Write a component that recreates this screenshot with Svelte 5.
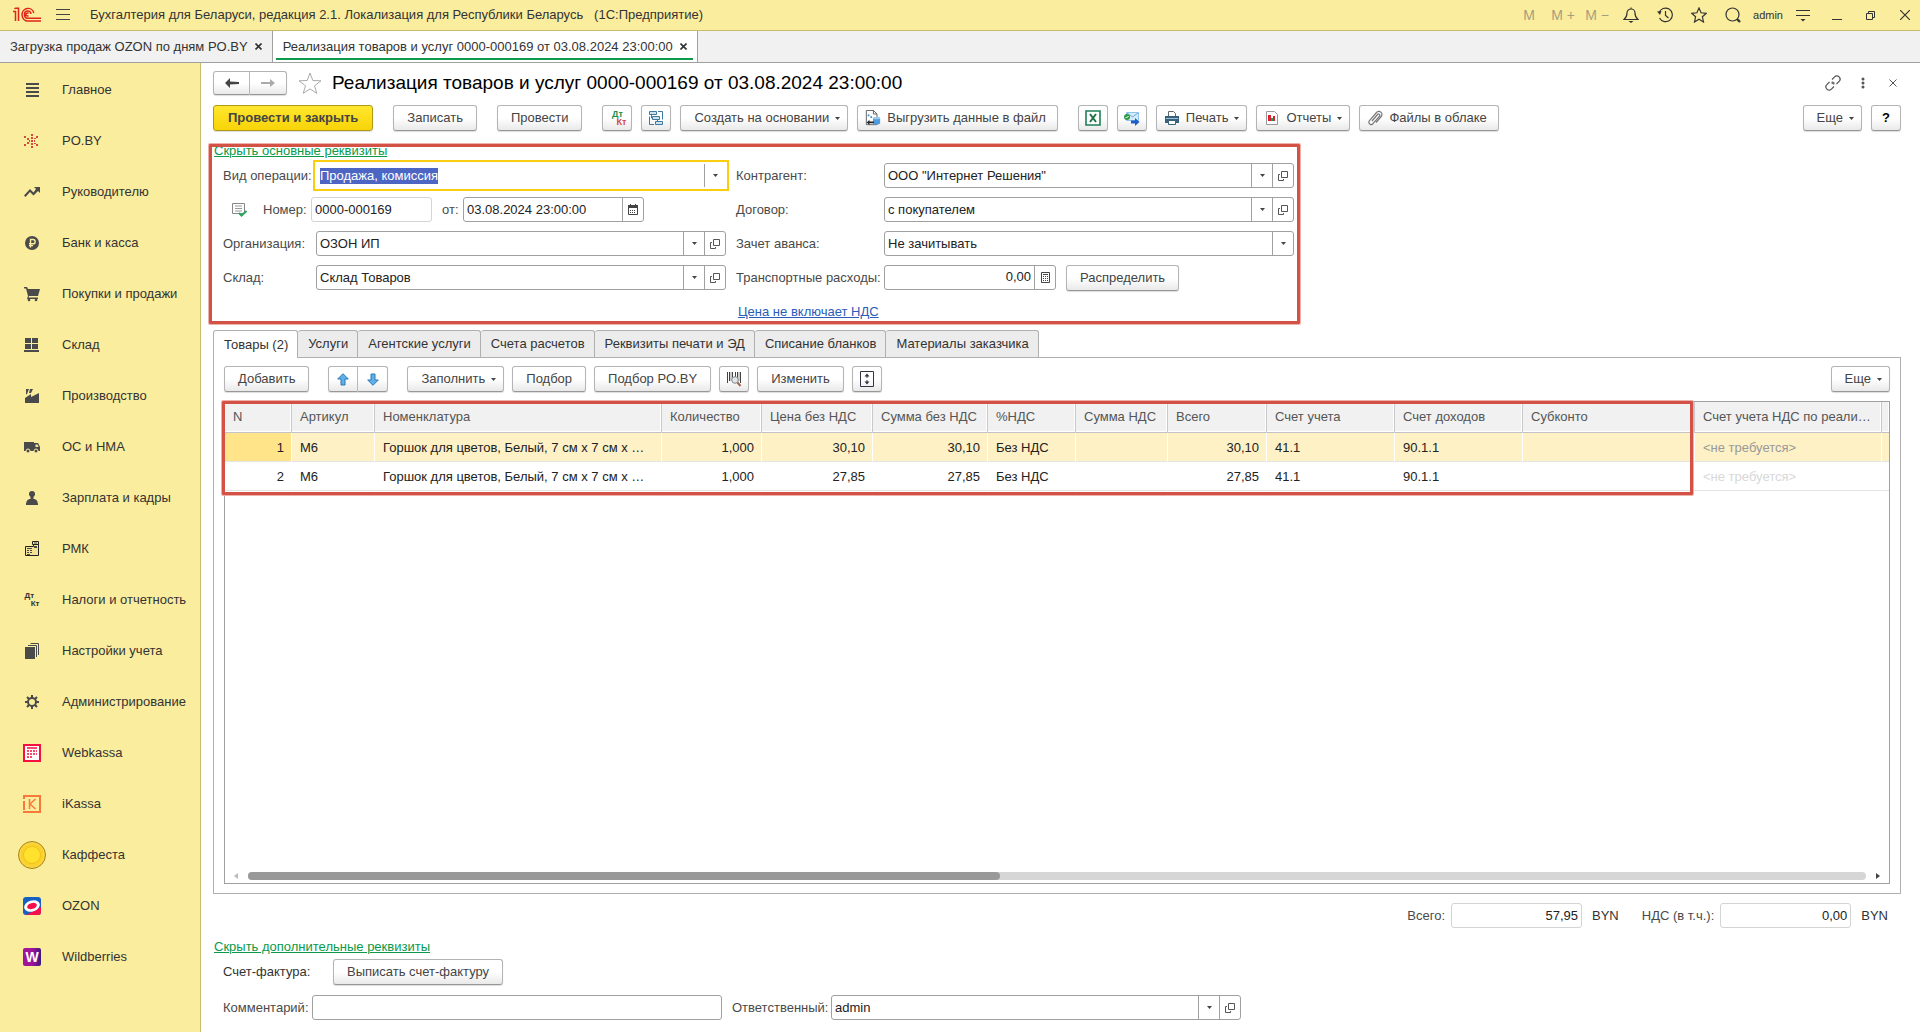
<script>
  import { onMount } from 'svelte'

  const docTabs = [
    { title: 'Загрузка продаж OZON по дням PO.BY', active: false },
    { title: 'Реализация товаров и услуг 0000-000169 от 03.08.2024 23:00:00', active: true },
  ]

  const sections = [
    ['list', 'Главное'],
    ['poby', 'PO.BY'],
    ['trend', 'Руководителю'],
    ['ruble', 'Банк и касса'],
    ['cart', 'Покупки и продажи'],
    ['stock', 'Склад'],
    ['factory', 'Производство'],
    ['truck', 'ОС и НМА'],
    ['person', 'Зарплата и кадры'],
    ['register', 'РМК'],
    ['dtkt', 'Налоги и отчетность'],
    ['books', 'Настройки учета'],
    ['gear', 'Администрирование'],
    ['webkassa', 'Webkassa'],
    ['ikassa', 'iKassa'],
    ['coin', 'Каффеста'],
    ['ozon', 'OZON'],
    ['wb', 'Wildberries'],
  ]

  const pages = [
    'Товары (2)',
    'Услуги',
    'Агентские услуги',
    'Счета расчетов',
    'Реквизиты печати и ЭД',
    'Списание бланков',
    'Материалы заказчика',
  ]

  const columns = [
    { title: 'N', width: 67, num: true },
    { title: 'Артикул', width: 83 },
    { title: 'Номенклатура', width: 287 },
    { title: 'Количество', width: 100, num: true },
    { title: 'Цена без НДС', width: 111, num: true },
    { title: 'Сумма без НДС', width: 115, num: true },
    { title: '%НДС', width: 88 },
    { title: 'Сумма НДС', width: 92, num: true },
    { title: 'Всего', width: 99, num: true },
    { title: 'Счет учета', width: 128 },
    { title: 'Счет доходов', width: 128 },
    { title: 'Субконто', width: 172 },
    { title: 'Счет учета НДС по реали…', width: 187, muted: true },
  ]

  const item = 'Горшок для цветов, Белый, 7 см х 7 см х 7 см'
  const rows = [
    ['1', 'М6', item, '1,000', '30,10', '30,10', 'Без НДС', '', '30,10', '41.1', '90.1.1', '', '<не требуется>'],
    ['2', 'М6', item, '1,000', '27,85', '27,85', 'Без НДС', '', '27,85', '41.1', '90.1.1', '', '<не требуется>'],
  ]

  let page = $state(0)
  let current = $state(0)
  let operation

  onMount(() => {
    operation.focus()
    operation.select()
  })
</script>

{#snippet caret()}
  <svg width="5" height="3" viewBox="0 0 5 3"><path d="M0 0h5L2.500 3z" fill="#444" /></svg>
{/snippet}

{#snippet openIcon()}
  <svg width="10" height="10" viewBox="0 0 10 10" fill="none" stroke="#555"><path d="M3.500.5h6v6h-6zM2 3.500H.5v6h5V8" /></svg>
{/snippet}

{#snippet pick(name)}
  <button class="part" aria-label="Выбрать: {name}">{@render caret()}</button>
  <button class="part" aria-label="Открыть: {name}">{@render openIcon()}</button>
{/snippet}

{#snippet dtkt()}
  <span class="dtkt"><span>Дт</span><span>Кт</span></span>
{/snippet}

{#snippet sectionIcon(name)}
  {#if name === 'dtkt'}
    {@render dtkt()}
  {:else if name === 'coin'}
    <svg width="28" height="28" viewBox="0 0 28 28"><circle cx="14" cy="14" r="13.500" fill="#fbd12c" stroke="#a88420" /><circle cx="14" cy="14" r="12" fill="none" stroke="#f7df6a" stroke-dasharray="1 1" /><circle cx="14" cy="14" r="8.500" fill="#ffe22d" stroke="#f3c018" /></svg>
  {:else if name === 'webkassa'}
    <svg width="18" height="18" viewBox="0 0 18 18"><path d="M1 1h16v16H1z" fill="#fff" stroke="#f5103f" stroke-width="2" /><path d="M4 4h10M4 7h2m1 0h2m1 0h2m1 0h1M4 10h2m1 0h2m1 0h2m1 0h1M4 13h2m1 0h2" stroke="#f5103f" stroke-width="1.600" /></svg>
  {:else if name === 'ikassa'}
    <svg width="18" height="18" viewBox="0 0 18 18" fill="none" stroke="#f9793a" stroke-width="2"><path d="M0 1h17v16H0M1 6v9M1 2v2" /><path d="M6.500 4v10M12.500 4l-5.500 5 5.500 5" stroke-width="1.500" /></svg>
  {:else if name === 'ozon'}
    <svg width="18" height="18" viewBox="0 0 18 18"><rect width="18" height="18" rx="3" fill="#1660c4" /><path d="M3 18 18 10v5a3 3 0 0 1-3 3z" fill="#f5104a" /><ellipse cx="9" cy="9" rx="8" ry="5.500" fill="#fff" transform="rotate(-18 9 9)" /><ellipse cx="9" cy="9" rx="5" ry="3" fill="#f5104a" transform="rotate(-18 9 9)" /></svg>
  {:else if name === 'wb'}
    <svg width="18" height="18" viewBox="0 0 18 18"><defs><linearGradient id="wb"><stop offset=".5" stop-color="#a0149b" /><stop offset="1" stop-color="#40187c" /></linearGradient></defs><rect width="18" height="18" rx="2" fill="url(#wb)" /><text x="9" y="14" text-anchor="middle" fill="#fff" font-size="14" font-weight="bold">W</text></svg>
  {:else}
    <svg width="16" height="16" viewBox="0 0 16 16" fill="#4a4a4a">
      {#if name === 'list'}
        <path d="M2 1h13v2H2zM2 5h13v2H2zM2 9h13v2H2zM2 13h13v2H2z" />
      {:else if name === 'poby'}
        <path fill="#d4493d" d="M7 1h2v2H7zM7 4h2v2H7zM7 7h2v2H7zM7 10h2v2H7zM7 13h2v2H7zM0 3h2v2H0zM3 5h2v2H3zM0 11h2v2H0zM3 9h2v2H3zM5 7h1v2H5zM10 7h1v2h-1zM12 3h2v2h-2zM10 5h2v1h-2zM12 11h2v2h-2zM10 10h2v1h-2z" />
      {:else if name === 'trend'}
        <path d="M10 3h6v6l-2-2-4.500 4.500L6 8l-4.500 5L0 11.500 6 5l3.500 3.500L12 5z" />
      {:else if name === 'ruble'}
        <circle cx="8" cy="8" r="7" /><path d="M6.500 12.500V4.500H9a2 2 0 0 1 0 4.300H5M5 10.600h4" fill="none" stroke="#fbec9e" stroke-width="1.400" />
      {:else if name === 'cart'}
        <path d="M0 1h3l1 2h12l-2 7H5l-.5 1.500H14V13H3l1-3L2 2.500H0z" /><circle cx="5" cy="14" r="1.300" /><circle cx="12" cy="14" r="1.300" />
      {:else if name === 'stock'}
        <path d="M1 1h6v5H1zM8 1h6v5H8zM1 7h6v5H1zM8 7h6v5H8zM0 13h15v2H0z" />
      {:else if name === 'factory'}
        <path d="M1 15v-5l6-4v3l8-4v10zM2 1h3L3 6l-1 .500zM6 1h3L7 5 5 5z" />
      {:else if name === 'truck'}
        <path d="M0 3h10v1h4l2 4v4H0z" /><path d="M11.500 5.500h2l1 2.500h-3z" fill="#fbec9e" /><circle cx="4" cy="12" r="2" stroke="#fbec9e" /><circle cx="12" cy="12" r="2" stroke="#fbec9e" />
      {:else if name === 'person'}
        <circle cx="8" cy="4" r="3" /><path d="M6.500 6h3v3h-3zM2 15c0-4 2-6 4-6h4c2 0 4 2 4 6z" />
      {:else if name === 'register'}
        <path d="M1.500 5.500h8v-2h5v11h-13zM8.500.5h6v3h-6z" fill="#f3e394" stroke="#222" /><path d="M3 7h5v1H3zM3 9h2v1H3zM6 9h2v1H6zM3 11h2v1H3zM6 11h2v1H6zM3 13h3v1H3zM10 1.500h3v1h-3zM10 5h3v2h-3z" />
      {:else if name === 'books'}
        <path d="M1 4h10v12H1z" /><path d="M4 2.500h8.500V14M6.500.5h8V12" fill="none" stroke="#4a4a4a" />
      {:else if name === 'gear'}
        <circle cx="8" cy="8" r="4" fill="none" stroke="#4a4a4a" stroke-width="2" /><path d="M7 1h2v3H7zM7 12h2v3H7zM1 7h3v2H1zM12 7h3v2h-3z" /><path d="m3 3 2 2m6 6 2 2M13 3l-2 2m-6 6-2 2" stroke="#4a4a4a" stroke-width="2" />
      {/if}
    </svg>
  {/if}
{/snippet}

<div class="app">
  <header class="titlebar">
    <svg class="logo" width="28" height="16" viewBox="0 0 28 16" fill="none" stroke="#e2231a" stroke-width="1.500">
      <path d="M0 4.500h2.500V14M1.500 2l1-.8h3V14M20.800 6A6 6.300 0 1 0 15 14h13M18 7a3.300 3.600 0 1 0-3 4.200h13M15.500 6.500a1.500 1.500 0 1 0 0 2" />
    </svg>
    <button class="bar-btn menu" aria-label="Меню">
      <svg width="14" height="12" viewBox="0 0 14 12"><path d="M0 .500h14M0 5.500h14M0 10.500h14" stroke="#444" /></svg>
    </button>
    <span class="app-title">Бухгалтерия для Беларуси, редакция 2.1. Локализация для Республики Беларусь&nbsp;&nbsp; (1С:Предприятие)</span>
    <div class="bar-tools">
      <button class="bar-btn mem">M</button>
      <button class="bar-btn mem">M +</button>
      <button class="bar-btn mem">M −</button>
      <button class="bar-btn" aria-label="Уведомления">
        <svg width="16" height="16" viewBox="0 0 16 16" fill="none" stroke="#333" stroke-width="1.200"><path d="M1 12.500c2.500-2 3-4 3-6.500a4 4 0 0 1 8 0c0 2.500.5 4.500 3 6.500zM8 .500V2" /><path d="M5.500 14h5L8 16z" fill="#333" stroke="none" /></svg>
      </button>
      <button class="bar-btn" aria-label="История">
        <svg width="16" height="16" viewBox="0 0 16 16" fill="none" stroke="#333" stroke-width="1.200"><path d="M2 6a6.800 6.800 0 1 1 .5 5M8.500 4v4.500l3 2.500" /><path d="M0 4.500 4.500 4 3 8z" fill="#333" stroke="none" /></svg>
      </button>
      <button class="bar-btn" aria-label="Избранное">
        <svg width="16" height="16" viewBox="0 0 16 16" fill="none" stroke="#333" stroke-width="1.200"><path d="m8 1 2.100 4.800 5.200.500-3.900 3.500 1.100 5.200L8 12.300 3.500 15l1.100-5.200L.7 6.300l5.200-.5z" /></svg>
      </button>
      <button class="bar-btn" aria-label="Поиск">
        <svg width="16" height="16" viewBox="0 0 16 16" fill="none" stroke="#333" stroke-width="1.200"><circle cx="7.500" cy="7.500" r="6.500" /><path d="m12 12 3 3" stroke-width="2.400" /></svg>
      </button>
      <button class="bar-btn user">admin</button>
      <button class="bar-btn" aria-label="Сервис">
        <svg width="14" height="13" viewBox="0 0 14 13"><path d="M0 1.500h14M0 6.500h14" stroke="#333" /><path d="M4.500 10h5L7 12.500z" fill="#333" /></svg>
      </button>
      <button class="bar-btn" aria-label="Свернуть">
        <svg width="10" height="10" viewBox="0 0 10 10"><path d="M0 9.500h10" stroke="#333" /></svg>
      </button>
      <button class="bar-btn" aria-label="Восстановить">
        <svg width="10" height="10" viewBox="0 0 10 10" fill="none" stroke="#333"><path d="M.5 3.500h6v6h-6zM2.500 3.500v-2h6v6h-2" /></svg>
      </button>
      <button class="bar-btn" aria-label="Закрыть программу">
        <svg width="10" height="10" viewBox="0 0 10 10"><path d="m0 0 10 10M10 0 0 10" stroke="#333" stroke-width="1.200" /></svg>
      </button>
    </div>
  </header>

  <div class="doc-tabs">
    {#each docTabs as tab}
      <div class="doc-tab" class:active={tab.active}>
        <button class="doc-name">{tab.title}</button>
        <button class="doc-close" aria-label="Закрыть вкладку">
          <svg width="7" height="7" viewBox="0 0 7 7"><path d="m.5.5 6 6m0-6-6 6" stroke="#333" stroke-width="1.600" /></svg>
        </button>
      </div>
    {/each}
  </div>

  <div class="body">
    <nav class="sections">
      {#each sections as [icon, label]}
        <a href="#{icon}">
          <span class="section-icon">{@render sectionIcon(icon)}</span>
          {label}
        </a>
      {/each}
    </nav>

    <main>
      <div class="form-head">
        <div class="btn-pair">
          <button class="btn" aria-label="Назад">
            <svg width="14" height="10" viewBox="0 0 14 10"><path d="M0 5 5 0v3.500L14 4v2l-9 .500V10z" fill="#444" /></svg>
          </button>
          <button class="btn" aria-label="Вперед">
            <svg width="14" height="10" viewBox="0 0 14 10"><path d="M14 5 9 1v3H0v2h9v3z" fill="#aaa" /></svg>
          </button>
        </div>
        <button class="plain star" aria-label="В избранное">
          <svg width="24" height="22" viewBox="0 0 24 22" fill="none" stroke="#aaa"><path d="m12 1 2.800 7.500 8.200.3-6.500 5 2.300 7.500-6.800-4.400-6.800 4.400 2.300-7.500L1 8.800l8.200-.3z" /></svg>
        </button>
        <h1>Реализация товаров и услуг 0000-000169 от 03.08.2024 23:00:00</h1>
        <div class="head-tools">
          <button class="plain" aria-label="Получить ссылку">
            <svg width="16" height="16" viewBox="0 0 16 16" fill="none" stroke="#555" stroke-width="1.200"><path d="m7 4.500 2.600-2.600a3 3 0 0 1 4.500 4.500L11.500 9M9 11.500l-2.600 2.600a3 3 0 0 1-4.500-4.500L4.500 7M7.500 9a2.500 2.500 0 0 1 0-2.500M8.500 7a2.500 2.500 0 0 1 0 2.500" /></svg>
          </button>
          <button class="plain" aria-label="Дополнительно">
            <svg width="4" height="12" viewBox="0 0 4 12" fill="#555"><circle cx="2" cy="2" r="1.500" /><circle cx="2" cy="6" r="1.500" /><circle cx="2" cy="10" r="1.500" /></svg>
          </button>
          <button class="plain" aria-label="Закрыть">
            <svg width="8" height="8" viewBox="0 0 8 8"><path d="m.5.5 7 7m0-7-7 7" stroke="#555" /></svg>
          </button>
        </div>
      </div>

      <div class="toolbar">
        <button class="btn primary">Провести и закрыть</button>
        <button class="btn group">Записать</button>
        <button class="btn group">Провести</button>
        <button class="btn square group color" aria-label="Дт Кт">{@render dtkt()}</button>
        <button class="btn square" aria-label="Структура подчиненности">
          <svg width="16" height="16" viewBox="0 0 16 16" fill="none" stroke="#3c78a0"><path d="M1.500 1.500h7v3h-7zM4.500 6.500h7v3h-7zM7.500 11.500h7v3h-7z" fill="#cfe3ef" /><path d="M10 1.500h4.500v8M1.500 6.500v8H6M3.500 4.500v3.500h1M9.500 9.500v2" /></svg>
        </button>
        <button class="btn drop">Создать на основании {@render caret()}</button>
        <button class="btn with-icon">
          <svg width="16" height="16" viewBox="0 0 18 18"><path d="M1.500.5h8l4 4v12h-12z" fill="#fff" stroke="#555" /><path d="M9.500.5v4h4" fill="none" stroke="#555" /><path d="M3 5h2v2H3zM6 7h2v2H6z" fill="#3a8cc4" /><ellipse cx="13" cy="9" rx="4" ry="1.500" fill="#9cc8ec" /><path d="M9 9v6c0 2 8 2 8 0V9c0 2-8 2-8 0" fill="#4f9bdc" /><path d="m2 14 3-3v2h5v2H5v2z" fill="#222" /></svg>
          Выгрузить данные в файл
        </button>
        <button class="btn square group" aria-label="Excel">
          <svg width="16" height="16" viewBox="0 0 16 16"><path d="M1 1h14v14H1z" fill="#fff" stroke="#1e7f55" stroke-width="1.600" /><path d="m5 4 6 8M11 4l-6 8" stroke="#1e7145" stroke-width="2" /></svg>
        </button>
        <button class="btn square" aria-label="Отправить">
          <svg width="16" height="16" viewBox="0 0 16 16"><path d="M2.500 2.500h12v8h-12z" fill="#d6ebfa" stroke="#8cc4ee" /><path d="m3 3 5.500 4L14 3" fill="none" stroke="#6aa9d8" /><circle cx="3" cy="7" r="3" fill="#2f9a48" /><path d="m1.500 7 1 1 2-2" fill="none" stroke="#fff" /><path d="M7 10.500h4V8l4.500 4L11 16v-2.500H7z" fill="#1a5fc8" /></svg>
        </button>
        <button class="btn drop with-icon">
          <svg width="16" height="16" viewBox="0 0 16 16"><path d="M4.500 1.500h5l2 2V7h-7z" fill="#fff" stroke="#666" /><path d="M1 6h14v7H1z" fill="#38617d" /><path d="M2 8h12v1H2z" fill="#9cc0d4" /><path d="M4.500 10.500h7v4h-7z" fill="#fff" stroke="#38617d" /></svg>
          Печать {@render caret()}
        </button>
        <button class="btn drop with-icon">
          <svg width="16" height="16" viewBox="0 0 16 16"><path d="M2.500 1.500h8l3 3v10h-11z" fill="#fff" stroke="#999" /><path d="M4 5h3v6H4z" fill="#d9232e" /><path d="M7 8h2v3H7z" fill="#1e9a5a" /><path d="M9 6h2v5H9z" fill="#d9232e" /></svg>
          Отчеты {@render caret()}
        </button>
        <button class="btn with-icon">
          <svg width="16" height="16" viewBox="0 0 16 16" fill="none" stroke="#777" stroke-width="1.200"><path d="m5 11 5.500-6.500a1.200 1.200 0 0 1 2 1.700l-6.500 7.500a2.300 2.300 0 0 1-3.500-3L9.500 2.500a3 3 0 0 1 4.700 4L9 12.500" /></svg>
          Файлы в облаке
        </button>
        <button class="btn drop last">Еще {@render caret()}</button>
        <button class="btn square help">?</button>
      </div>

      <section class="details">
        <a class="fold" href="#main">Скрыть основные реквизиты</a>
        <div class="fields">
          <label for="operation">Вид операции:</label>
          <div class="field focus">
            <input id="operation" value="Продажа, комиссия" bind:this={operation} />
            <button class="part" aria-label="Выбрать вид операции">{@render caret()}</button>
          </div>
          <label class="second" for="partner">Контрагент:</label>
          <div class="field">
            <input id="partner" value={'ООО "Интернет Решения"'} />
            {@render pick('контрагент')}
          </div>

          <div class="number">
            <svg width="16" height="14" viewBox="0 0 16 14"><path d="M.5.5h12v10H.500z" fill="#fff" stroke="#888" /><path d="M3 3h7M3 5.500h7M3 8h7" stroke="#999" /><path d="m7 10 2.500 2.500L14.500 8" fill="none" stroke="#2fa45c" stroke-width="2" /></svg>
            <label for="number">Номер:</label>
            <div class="field readonly short"><input id="number" value="0000-000169" readonly /></div>
            <label for="date">от:</label>
            <div class="field date">
              <input id="date" value="03.08.2024 23:00:00" />
              <button class="part" aria-label="Календарь">
                <svg width="10" height="11" viewBox="0 0 10 11"><path d="M.5 2.500h9v8h-9z" fill="none" stroke="#444" /><path d="M0 1h10v3H0zM2 0h1v2H2zM7 0h1v2H7z" fill="#444" /><path d="M2 6.500h6M2 8.500h6" stroke="#444" stroke-dasharray="1 1" /></svg>
              </button>
            </div>
          </div>
          <label class="second" for="contract">Договор:</label>
          <div class="field">
            <input id="contract" value="с покупателем" />
            {@render pick('договор')}
          </div>

          <label for="company">Организация:</label>
          <div class="field">
            <input id="company" value="ОЗОН ИП" />
            {@render pick('организация')}
          </div>
          <label class="second" for="advance">Зачет аванса:</label>
          <div class="field">
            <select id="advance"><option>Не зачитывать</option></select>
            <span class="part">{@render caret()}</span>
          </div>

          <label for="store">Склад:</label>
          <div class="field">
            <input id="store" value="Склад Товаров" />
            {@render pick('склад')}
          </div>
          <label class="second" for="transport">Транспортные расходы:</label>
          <div class="transport">
            <div class="field">
              <input id="transport" class="num" value="0,00" />
              <button class="part" aria-label="Калькулятор">
                <svg width="9" height="11" viewBox="0 0 9 11"><path d="M.5.5h8v10h-8z" fill="none" stroke="#444" /><path d="M2 2.500h5" stroke="#444" /><path d="M2 4.500h5M2 6.500h5M2 8.500h5" stroke="#444" stroke-dasharray="1 1" /></svg>
              </button>
            </div>
            <button class="btn">Распределить</button>
          </div>

          <a class="vat" href="#vat">Цена не включает НДС</a>
        </div>
      </section>

      <div class="pages" role="tablist">
        {#each pages as title, i}
          <button role="tab" class:active={page === i} aria-selected={page === i} onclick={() => (page = i)}>{title}</button>
        {/each}
      </div>

      <section class="panel">
        <div class="toolbar">
          <button class="btn">Добавить</button>
          <div class="btn-pair group">
            <button class="btn" aria-label="Вверх">
              <svg width="12" height="13" viewBox="0 0 12 13"><path d="m6 .700 5.300 5.300H8v6H4V6H.7z" fill="#5eb0ea" stroke="#2a78b4" /></svg>
            </button>
            <button class="btn" aria-label="Вниз">
              <svg width="12" height="13" viewBox="0 0 12 13"><path d="M6 12.300 11.300 7H8V1H4v6H.7z" fill="#5eb0ea" stroke="#2a78b4" /></svg>
            </button>
          </div>
          <button class="btn drop group">Заполнить {@render caret()}</button>
          <button class="btn">Подбор</button>
          <button class="btn">Подбор PO.BY</button>
          <button class="btn square" aria-label="Поиск по штрихкоду">
            <svg width="16" height="16" viewBox="0 0 16 16"><path d="M1.500 1v11M3.500 1v9M6.500 1v9M9.500 1v6M11.500 1v6M14.500 1v11" stroke="#444" /><path d="M5 1v9M13 1v9" stroke="#999" /><circle cx="9" cy="9" r="3.300" fill="#dde6ec" stroke="#888" /><path d="m11.500 11.500 3 3.500" stroke="#a0664a" stroke-width="2" /></svg>
          </button>
          <button class="btn">Изменить</button>
          <button class="btn square" aria-label="Высота строк">
            <svg width="16" height="16" viewBox="0 0 16 16"><path d="M1.500.5h13v15h-13z" fill="none" stroke="#334" /><path d="M8 4v3M8 9v3" stroke="#334" /><path d="M5.500 5.500h5L8 2.500zM5.500 10.500h5l-2.500 3z" fill="#334" /></svg>
          </button>
          <button class="btn drop last">Еще {@render caret()}</button>
        </div>

        <div class="grid">
          <table>
            <colgroup>
              {#each columns as col}
                <col style="width: {col.width}px" />
              {/each}
              <col />
            </colgroup>
            <thead>
              <tr>
                {#each columns as col}
                  <th>{col.title}</th>
                {/each}
                <th></th>
              </tr>
            </thead>
            <tbody>
              {#each rows as row, r}
                <tr class:current={current === r} onclick={() => (current = r)}>
                  {#each row as cell, c}
                    <td class:num={columns[c].num} class:muted={columns[c].muted}>{cell}</td>
                  {/each}
                  <td></td>
                </tr>
              {/each}
            </tbody>
          </table>
          <div class="scroll">
            <svg width="4" height="6" viewBox="0 0 4 6"><path d="M4 0v6L0 3z" fill="#bbb" /></svg>
            <div class="track"><div class="thumb"></div></div>
            <svg width="4" height="6" viewBox="0 0 4 6"><path d="M0 0v6l4-3z" fill="#444" /></svg>
          </div>
        </div>
      </section>

      <div class="totals">
        <label for="total">Всего:</label>
        <div class="field readonly"><input id="total" class="num" value="57,95" readonly /></div>
        <span class="currency">BYN</span>
        <label for="vat-total">НДС (в т.ч.):</label>
        <div class="field readonly"><input id="vat-total" class="num" value="0,00" readonly /></div>
        <span class="currency">BYN</span>
      </div>

      <footer>
        <a class="fold" href="#extra">Скрыть дополнительные реквизиты</a>
        <div class="line invoice">
          <span>Счет-фактура:</span>
          <button class="btn">Выписать счет-фактуру</button>
        </div>
        <div class="line">
          <label for="comment">Комментарий:</label>
          <div class="field"><input id="comment" /></div>
          <label class="resp" for="resp">Ответственный:</label>
          <div class="field">
            <input id="resp" value="admin" />
            {@render pick('ответственный')}
          </div>
        </div>
      </footer>
    </main>
  </div>
</div>

<style>
  :global(body) {
    margin: 0;
    background: #fff;
  }

  .app {
    display: flex;
    flex-direction: column;
    min-height: 100vh;
    font: 13px/16px 'Liberation Sans', Arial, sans-serif;
    color: #333;
  }

  .app *,
  .app *::after {
    box-sizing: border-box;
  }

  button,
  input,
  select {
    margin: 0;
    font: inherit;
    color: inherit;
  }

  svg {
    display: block;
    flex: none;
  }

  /* window title */
  .titlebar {
    display: flex;
    align-items: center;
    height: 31px;
    padding-left: 13px;
    background: #fbed9e;
    border-bottom: 1px solid #c9bb6c;
  }

  .bar-btn,
  .plain {
    display: flex;
    align-items: center;
    justify-content: center;
    padding: 0;
    border: 0;
    background: none;
  }

  .bar-btn {
    width: 30px;
    height: 28px;
  }

  .menu {
    margin: 0 12px 0 7px;
  }

  .app-title {
    flex: 1;
    white-space: nowrap;
  }

  .bar-tools {
    display: flex;
    gap: 4px;
  }

  .mem {
    font-size: 14px;
    color: #a69f7c;
    white-space: nowrap;
  }

  .user {
    width: 32px;
    font-size: 11px;
  }

  /* open documents */
  .doc-tabs {
    display: flex;
    height: 32px;
    background: #f1f1f1;
    border-bottom: 1px solid #a0a0a0;
  }

  .doc-tab {
    position: relative;
    display: flex;
    align-items: center;
    padding: 0 5px 0 10px;
    border-right: 1px solid #a0a0a0;
  }

  .doc-tab.active {
    background: #fff;
  }

  .doc-tab.active::after {
    content: '';
    position: absolute;
    inset: auto 4px 2px 3px;
    height: 2px;
    background: #0a9a4a;
  }

  .doc-name,
  .doc-close {
    padding: 0;
    border: 0;
    background: none;
    white-space: nowrap;
  }

  .doc-close {
    display: flex;
    justify-content: center;
    width: 16px;
    margin-left: 3px;
  }

  .body {
    display: flex;
    flex: 1;
  }

  /* sections panel */
  .sections {
    flex: none;
    width: 201px;
    padding-top: 1px;
    background: #fbed9e;
    border-right: 1px solid #c9bb6c;
  }

  .sections a {
    display: flex;
    align-items: center;
    gap: 16px;
    height: 51px;
    padding-left: 18px;
    color: #333;
    text-decoration: none;
    white-space: nowrap;
  }

  .section-icon {
    display: flex;
    justify-content: center;
    width: 28px;
  }

  .dtkt {
    display: flex;
    flex-direction: column;
    width: 15px;
    font-size: 8px;
    font-weight: bold;
    line-height: 8px;
  }

  .dtkt span + span {
    align-self: flex-end;
  }

  .color .dtkt {
    width: 18px;
    font-size: 9px;
    color: #1d8f4d;
  }

  .color .dtkt span + span {
    color: #d4493d;
  }

  main {
    display: flex;
    flex: 1;
    flex-direction: column;
    min-width: 0;
    padding: 8px 19px 12px 12px;
  }

  .form-head {
    display: flex;
    align-items: center;
    height: 24px;
  }

  .star {
    margin: 0 10px 0 11px;
  }

  h1 {
    flex: 1;
    margin: 0;
    font-size: 19px;
    font-weight: normal;
    line-height: 24px;
    color: #000;
  }

  .head-tools {
    display: flex;
    margin-right: -7px;
  }

  .head-tools .plain {
    width: 30px;
    height: 24px;
  }

  /* buttons */
  .btn {
    display: flex;
    align-items: center;
    justify-content: center;
    height: 26px;
    padding: 0 13px;
    border: 1px solid #b4b4b4;
    border-bottom-color: #979797;
    border-radius: 3px;
    background: linear-gradient(#fff 50%, #e9e9e9);
    box-shadow: 0 1px 1px #ddd;
    color: #444;
    white-space: nowrap;
  }

  .primary {
    padding: 0 14px;
    border-color: #b09a14;
    background: linear-gradient(#ffe62e, #f8d408);
    font-weight: bold;
  }

  .square {
    width: 30px;
    padding: 0;
  }

  .drop {
    gap: 6px;
    padding-right: 7px;
  }

  .with-icon {
    gap: 6px;
    padding-left: 7px;
  }

  .with-icon:not(.drop) {
    padding-right: 11px;
  }

  .help {
    color: #000;
    font-weight: bold;
  }

  .btn-pair {
    display: flex;
  }

  .btn-pair .btn {
    width: 30px;
    padding: 0;
  }

  .form-head .btn-pair .btn {
    width: 37px;
    height: 24px;
  }

  .btn-pair .btn:first-child {
    border-radius: 3px 0 0 3px;
  }

  .btn-pair .btn:last-child {
    border-left: 0;
    border-radius: 0 3px 3px 0;
  }

  .toolbar {
    display: flex;
    gap: 9px;
  }

  main > .toolbar {
    margin-top: 10px;
  }

  .panel .toolbar {
    gap: 8px;
  }

  .toolbar .group {
    margin-left: 11px;
  }

  .toolbar .last {
    margin-left: auto;
  }

  /* input fields */
  .field {
    display: flex;
    height: 25px;
    min-width: 0;
    border: 1px solid #a0a0a0;
    border-radius: 3px;
    background: #fff;
  }

  .field input,
  .field select {
    flex: 1;
    min-width: 0;
    width: 0;
    padding: 0 3px;
    border: 0;
    outline: 0;
    background: none;
    appearance: none;
    color: #222;
  }

  .field input::selection {
    background: #4d66c4;
    color: #fff;
  }

  input.num,
  td.num {
    text-align: right;
  }

  .part {
    display: flex;
    align-items: center;
    justify-content: center;
    width: 21px;
    padding: 0;
    border: 0;
    border-left: 1px solid #a0a0a0;
    background: none;
  }

  .readonly {
    border-color: #d4d4d4;
  }

  .focus {
    border-color: transparent;
    outline: 2px solid #fbcd0f;
    outline-offset: 1px;
    border-radius: 0;
  }

  a.fold,
  a.vat {
    color: #0a9a4a;
  }

  .fold {
    display: block;
    width: max-content;
    margin-left: 1px;
  }

  .details {
    position: relative;
    margin-top: 12px;
  }

  /* red marker frames */
  .details::after,
  .grid::after {
    content: '';
    position: absolute;
    border: 3px solid #d35245;
    box-shadow: 0 0 0 1px #eeb0aa;
    border-radius: 1px;
    pointer-events: none;
  }

  .details::after {
    top: 1px;
    left: -4px;
    width: 1091px;
    height: 180px;
  }

  .fields {
    display: grid;
    grid-template-columns: 93px minmax(0, 410px) 158px minmax(0, 410px);
    grid-auto-rows: 25px;
    row-gap: 9px;
    align-items: center;
    padding: 4px 0 0 10px;
  }

  .second {
    padding-left: 10px;
  }

  label {
    color: #4a4a4a;
    white-space: nowrap;
  }

  .number {
    display: flex;
    grid-column: span 2;
    align-items: center;
    padding-left: 9px;
  }

  .number label {
    width: 48px;
    margin-left: 15px;
  }

  .number .short {
    width: 121px;
  }

  .number .short + label {
    width: 21px;
    margin-left: 10px;
  }

  .date {
    width: 181px;
  }

  .transport {
    display: flex;
    gap: 10px;
  }

  .transport .field {
    width: 172px;
  }

  a.vat {
    grid-column: 3 / span 2;
    padding-left: 12px;
    color: #2a5db8;
  }

  /* form pages */
  .pages {
    display: flex;
    margin-top: 6px;
  }

  .pages button {
    height: 27px;
    padding: 0 9px 0 10px;
    border: 1px solid #b0b0b0;
    border-width: 1px 1px 0 0;
    border-radius: 3px 3px 0 0;
    background: #ececec;
    white-space: nowrap;
  }

  .pages button:first-child {
    border-left-width: 1px;
  }

  .pages button.active {
    height: 28px;
    margin-bottom: -1px;
    background: #fff;
    z-index: 1;
  }

  .panel {
    display: flex;
    flex: 1;
    flex-direction: column;
    padding: 8px 10px 9px;
    border: 1px solid #b0b0b0;
  }

  .grid {
    position: relative;
    display: flex;
    flex: 1;
    flex-direction: column;
    justify-content: space-between;
    margin-top: 9px;
    border: 1px solid #a0a0a0;
  }

  .grid::after {
    top: -1px;
    left: -3px;
    width: 1471px;
    height: 94px;
  }

  table {
    width: 100%;
    border-collapse: separate;
    border-spacing: 0;
    table-layout: fixed;
  }

  th,
  td {
    overflow: hidden;
    padding: 0 4px 0 8px;
    border-right: 1px solid #fff;
    text-align: left;
    text-overflow: ellipsis;
    white-space: nowrap;
  }

  th {
    height: 31px;
    border-right-color: #c9c9cd;
    border-bottom: 1px solid #c4c4c8;
    background: #f1f1f1;
    box-shadow: inset -1px -1px #fff;
    color: #555;
    font-weight: normal;
  }

  td {
    height: 29px;
    padding: 1px 12px 0 8px;
    border-bottom: 1px solid #e4e4e4;
    color: #222;
  }

  td.num {
    padding-right: 7px;
  }

  th:last-child,
  td:last-child {
    padding: 0;
    border-right: 0;
  }

  td.muted {
    color: #d8d8d8;
  }

  .current td {
    background: #fef1c6;
  }

  .current td:first-child {
    background: #ffe48a;
  }

  .current td.muted {
    color: #999;
  }

  .scroll {
    display: flex;
    gap: 10px;
    align-items: center;
    padding: 0 9px 3px;
  }

  .track {
    flex: 1;
    height: 8px;
    border-radius: 4px;
    background: #d6d6d6;
  }

  .thumb {
    width: 46.5%;
    height: 8px;
    border-radius: 4px;
    background: #999;
  }

  .totals {
    display: flex;
    align-items: center;
    justify-content: flex-end;
    margin-top: 9px;
    padding-right: 13px;
  }

  .totals .field {
    width: 131px;
    margin: 0 10px 0 6px;
  }

  .currency + label {
    margin-left: 23px;
  }

  footer {
    margin-top: 11px;
  }

  .line {
    display: flex;
    align-items: center;
    padding-left: 10px;
  }

  .invoice {
    margin: 4px 0 10px;
  }

  .invoice span {
    width: 110px;
  }

  .line label {
    width: 89px;
  }

  .line label.resp {
    width: 99px;
    margin-left: 10px;
  }

  .line .field {
    flex: 0 1 410px;
  }
</style>
